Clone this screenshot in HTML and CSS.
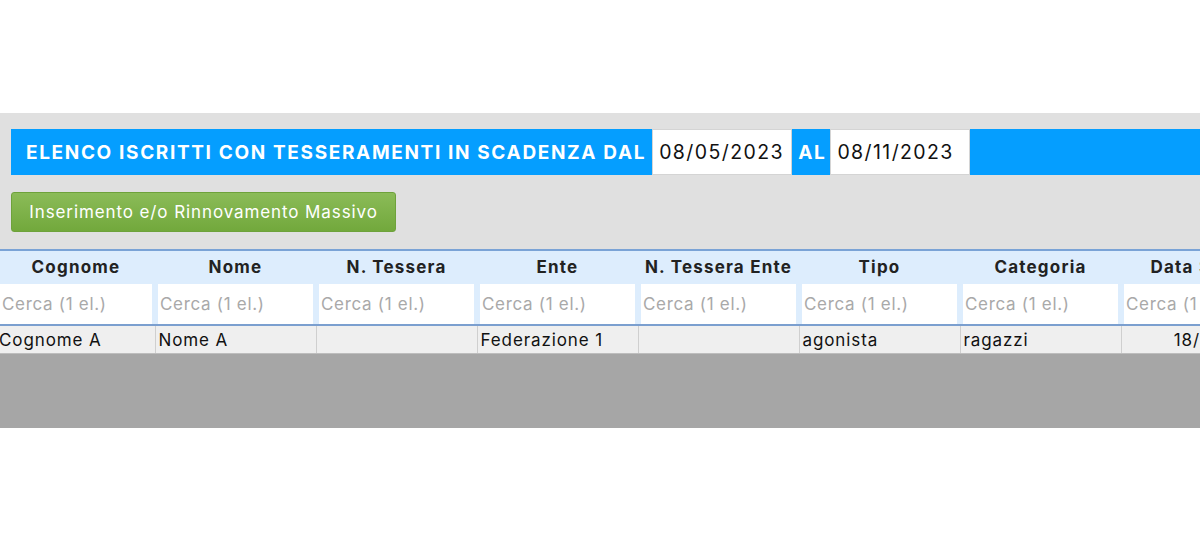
FILE: index.html
```html
<!DOCTYPE html>
<html>
<head>
<meta charset="utf-8">
<link rel="stylesheet" href="styles.css">
</head>
<body>
<div class="top-space"></div>
<div class="panel">
  <div class="titlebar">
    <span class="title">ELENCO ISCRITTI CON TESSERAMENTI IN SCADENZA DAL</span>
    <span class="date">08/05/2023</span>
    <span class="title al">AL</span>
    <span class="date">08/11/2023</span>
  </div>
  <button class="btn">Inserimento e/o Rinnovamento Massivo</button>
  <div class="grid-wrap">
    <table class="grid">
      <colgroup>
        <col class="c1"><col class="c"><col class="c"><col class="c"><col class="c"><col class="c"><col class="c"><col class="c">
      </colgroup>
      <thead>
        <tr class="head">
          <th>Cognome</th><th>Nome</th><th>N. Tessera</th><th>Ente</th><th>N. Tessera Ente</th><th>Tipo</th><th>Categoria</th><th>Data Scad.</th>
        </tr>
        <tr class="filter">
          <td><div class="inp">Cerca (1 el.)</div></td>
          <td><div class="inp">Cerca (1 el.)</div></td>
          <td><div class="inp">Cerca (1 el.)</div></td>
          <td><div class="inp">Cerca (1 el.)</div></td>
          <td><div class="inp">Cerca (1 el.)</div></td>
          <td><div class="inp">Cerca (1 el.)</div></td>
          <td><div class="inp">Cerca (1 el.)</div></td>
          <td><div class="inp">Cerca (1 el.)</div></td>
        </tr>
      </thead>
      <tbody>
        <tr class="row">
          <td>Cognome A</td><td>Nome A</td><td></td><td>Federazione 1</td><td></td><td>agonista</td><td>ragazzi</td><td class="num">18/05/2023</td>
        </tr>
      </tbody>
    </table>
    <div class="grid-empty"></div>
  </div>
</div>
</body>
</html>
```

FILE: styles.css
```css
html, body {
  margin: 0;
  padding: 0;
  background: #ffffff;
  font-family: Inter, "Liberation Sans", Arial, sans-serif;
  overflow: hidden;
}
.top-space {
  height: 113px;
}
.panel {
  background: #e0e0e0;
  padding: 16px 0 0 0;
  display: flex;
  flex-direction: column;
  align-items: flex-start;
}
.titlebar {
  margin-left: 11px;
  width: calc(100% - 11px);
  height: 46px;
  background: #059eff;
  display: flex;
  align-items: stretch;
}
.title {
  color: #ffffff;
  font-weight: bold;
  font-size: 19px;
  letter-spacing: 1.65px;
  display: flex;
  align-items: center;
  padding: 0 6px 0 15px;
  white-space: nowrap;
}
.title.al {
  padding: 0 4px 0 6px;
}
.date {
  background: #ffffff;
  color: #111;
  font-size: 19.5px;
  letter-spacing: 1.4px;
  display: flex;
  align-items: center;
  padding: 0 6px;
  width: 126px;
  border: 1px solid #d4d4d4;
  box-sizing: content-box;
  height: 44px;
  white-space: nowrap;
}
.btn {
  margin: 17px 0 0 11px;
  width: 385px;
  height: 40px;
  border: 1px solid #6ea23b;
  border-radius: 3px;
  background: linear-gradient(#8bbb58, #72a83c);
  color: #ffffff;
  font-family: Inter, "Liberation Sans", Arial, sans-serif;
  font-size: 17px;
  letter-spacing: 0.9px;
  padding: 0;
  text-align: center;
  white-space: nowrap;
}
.grid-wrap {
  margin-top: 17px;
  width: 100%;
  overflow: hidden;
}
.grid {
  table-layout: fixed;
  border-collapse: collapse;
  width: 1285px;
  margin-left: -3px;
}
.grid col.c1 { width: 158px; }
.grid col.c { width: 161px; }
.head th {
  background: #ddedfd;
  border-top: 2px solid #7aa3d6;
  height: 32px;
  padding: 0;
  font-size: 17px;
  font-weight: bold;
  letter-spacing: 1.2px;
  color: #222;
  text-align: center;
  white-space: nowrap;
}
.filter td {
  background: #ddedfd;
  padding: 0 3px;
  height: 41px;
  border-bottom: 2px solid #7b9fcf;
}
.inp {
  background: #ffffff;
  height: 40px;
  display: flex;
  align-items: center;
  padding-left: 2px;
  color: #a9a9a9;
  font-size: 17px;
  letter-spacing: 0.7px;
  white-space: nowrap;
  overflow: hidden;
}
.row td {
  background: #efefef;
  border-right: 1px solid #cfcfcf;
  height: 27px;
  padding: 0 3px;
  font-size: 17px;
  letter-spacing: 0.9px;
  color: #111;
  white-space: nowrap;
  overflow: hidden;
}
.row td:first-child {
  padding-left: 2px;
}
.row td.num {
  text-align: right;
  padding-right: 6px;
}
.grid-empty {
  height: 74px;
  background: #a6a6a6;
  border-top: 1px solid #bdbdbd;
}
```
